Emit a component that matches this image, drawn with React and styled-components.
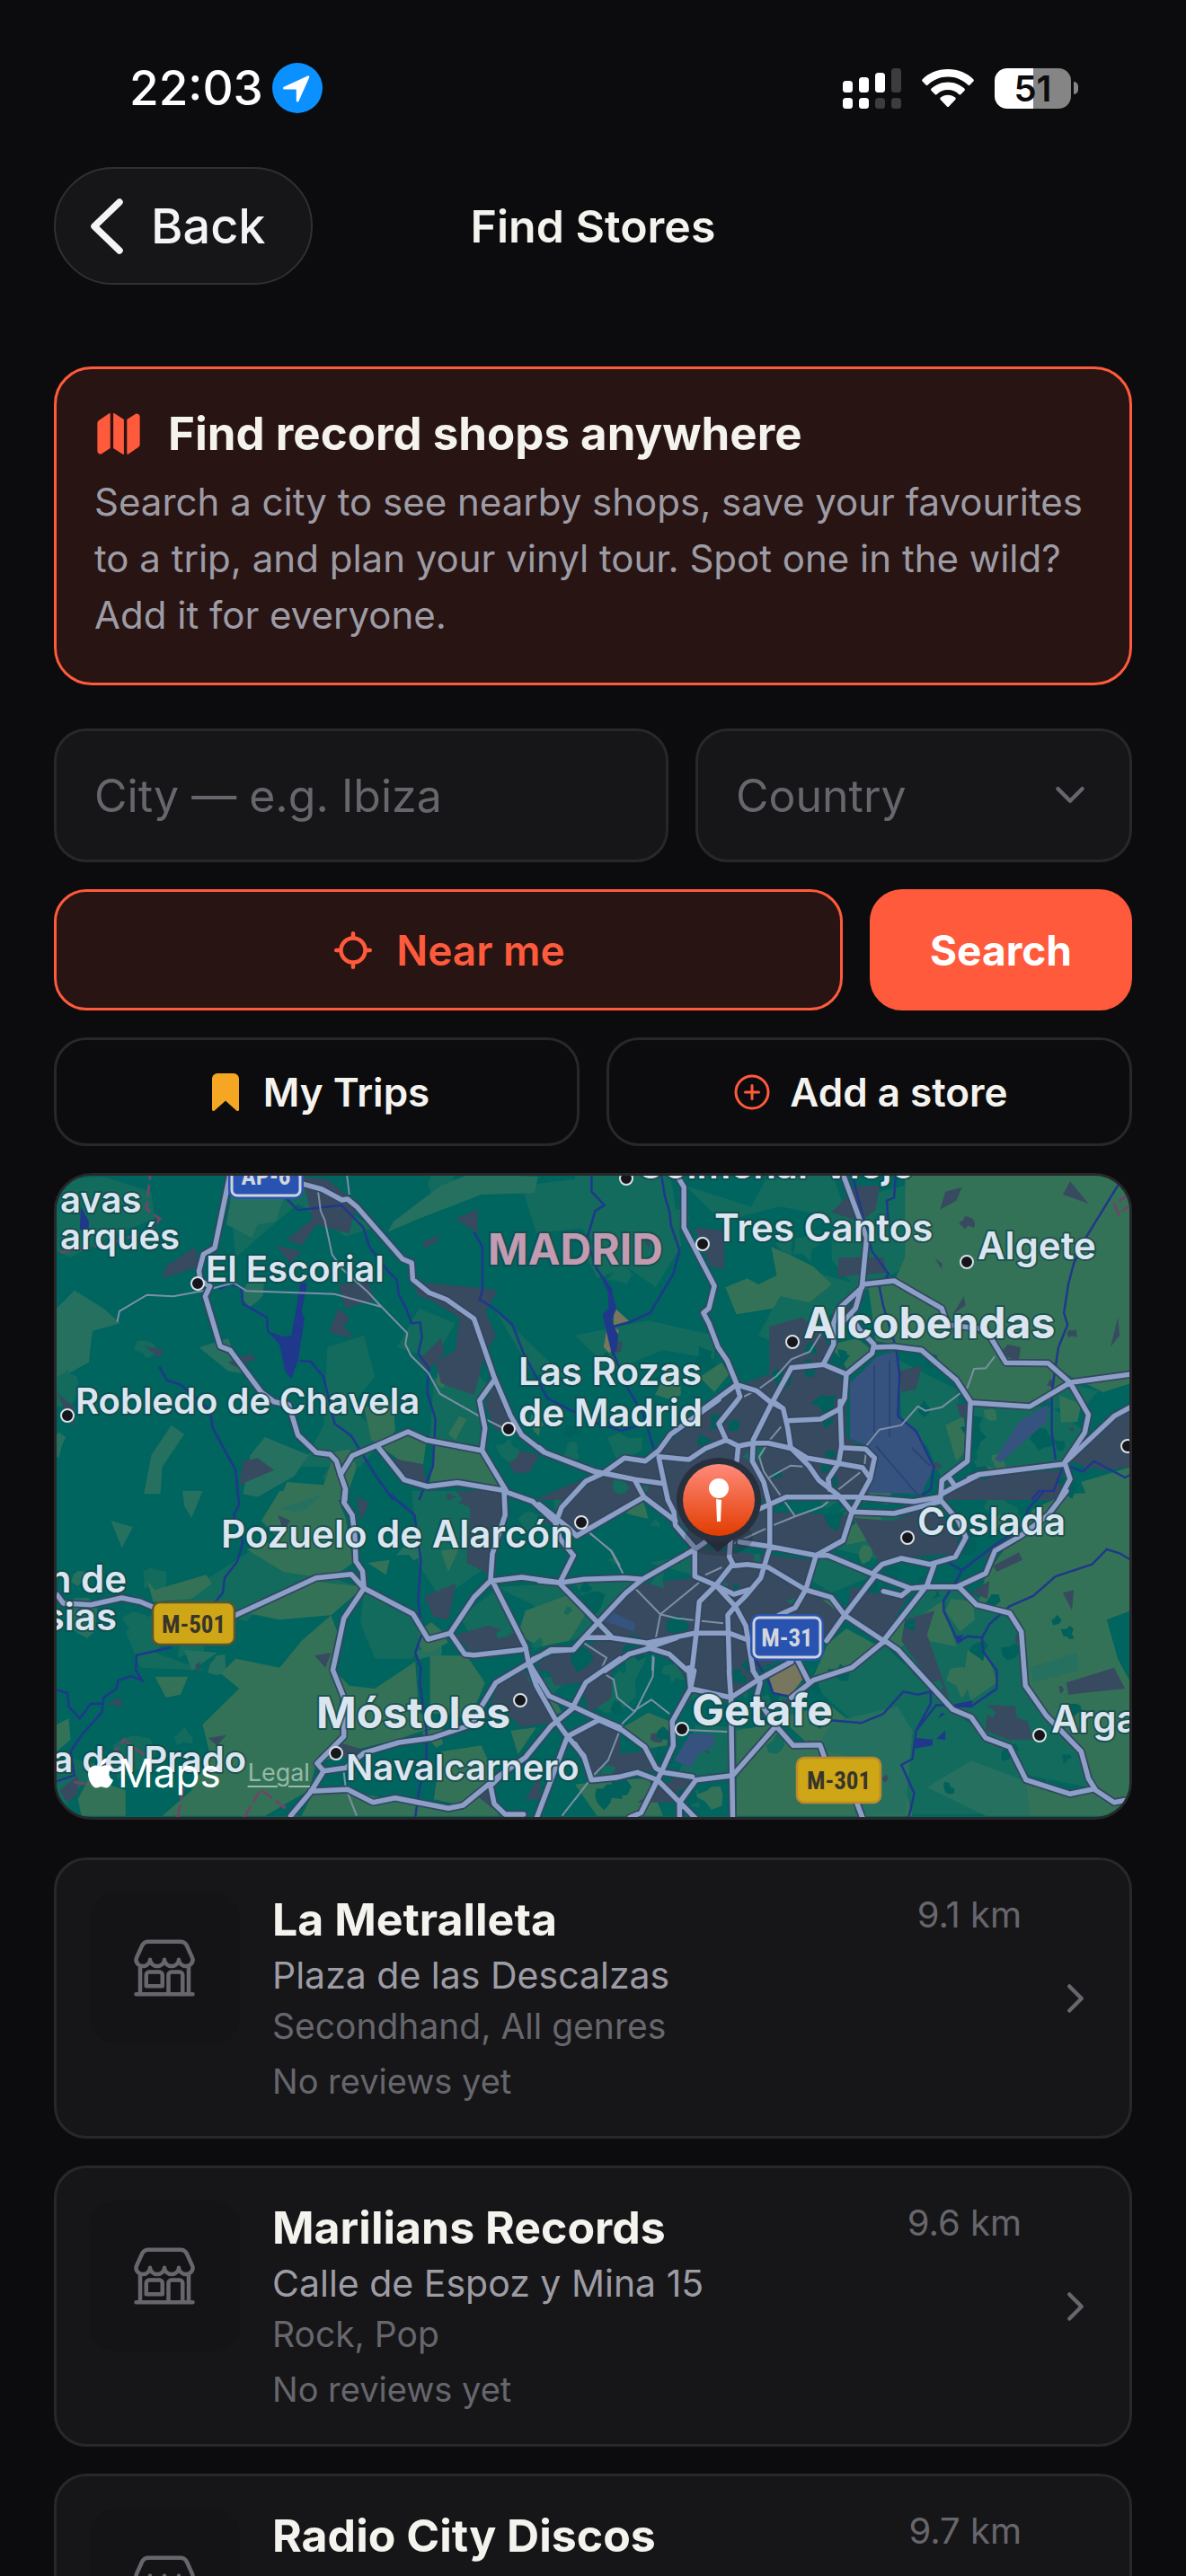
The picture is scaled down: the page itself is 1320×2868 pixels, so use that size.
import React from "react";
import styled, { createGlobalStyle } from "styled-components";
import {
  IoAddCircleOutline,
  IoBookmark,
  IoChevronDown,
  IoChevronForward,
  IoLocate,
  IoMap,
  IoStorefrontOutline,
} from "react-icons/io5";
import { FaApple } from "react-icons/fa";

const color = {
  bg: "#0c0c0e",
  surface: "#161618",
  line: "#28282b",
  text: "#f5f3ee",
  muted: "#9d9ca5",
  dim: "#67666d",
  accent: "#ff5a3c",
  accentBg: "#281413",
  amber: "#f5a623",
};

const GlobalStyle = createGlobalStyle`
  *, *::before, *::after { box-sizing: border-box; }
  body { margin: 0; background: ${color.bg}; }
  body, button, input, select { font-family: Inter, "Liberation Sans", sans-serif; }
  button, input, select { margin: 0; }
  h1, h2, h3, p, ul { margin: 0; padding: 0; }
`;

const Screen = styled.div`
  height: 100vh;
  overflow-x: hidden;
  overflow-y: auto;
  scrollbar-width: none;
  background: ${color.bg};
  color: ${color.text};
`;

const StatusBar = styled.div`
  display: flex;
  align-items: center;
  justify-content: space-between;
  height: 56px;
  margin: 70px 120px 60px 144px;
`;

const StatusGroup = styled.div`
  display: flex;
  align-items: center;
  gap: ${(p) => p.$gap}px;
`;

const Clock = styled.time`
  font-size: 53px;
  font-weight: 500;
  line-height: 56px;
  color: #fff;
`;

const Battery = styled.div`
  display: flex;
  align-items: center;
  gap: 3px;
`;

const BatteryBody = styled.div`
  width: 85px;
  height: 45px;
  border-radius: 14px;
  background: linear-gradient(90deg, #fff 51%, #858585 51%);
  color: ${color.bg};
  font-size: 40px;
  font-weight: 600;
  line-height: 45px;
  text-align: center;
`;

const BatteryCap = styled.div`
  width: 5px;
  height: 14px;
  border-radius: 0 8px 8px 0;
  background: #858585;
`;

const NavBar = styled.header`
  display: grid;
  grid-template-columns: 1fr auto 1fr;
  align-items: center;
  padding: 0 60px;
  margin-bottom: 91px;
`;

const BackButton = styled.button`
  justify-self: start;
  display: flex;
  align-items: center;
  gap: 28px;
  height: 131px;
  padding: 0 50px 0 36px;
  border: 2px solid #303033;
  border-radius: 66px;
  background: ${color.surface};
  color: #f4f4f6;
  font-size: 54px;
  font-weight: 500;
`;

const NavTitle = styled.h1`
  font-size: 50px;
  font-weight: 600;
  line-height: 60px;
`;

const Main = styled.main`
  display: flex;
  flex-direction: column;
  gap: 30px;
  padding: 0 60px 60px;
`;

const Hero = styled.section`
  display: flex;
  flex-direction: column;
  gap: 14px;
  padding: 42px 42px 44px;
  margin-bottom: 18px;
  border: 3px solid ${color.accent};
  border-radius: 42px;
  background: ${color.accentBg};
`;

const HeroHeading = styled.div`
  display: flex;
  align-items: center;
  gap: 28px;
  color: ${color.accent};
`;

const HeroTitle = styled.h2`
  color: ${color.text};
  font-size: 51px;
  font-weight: 700;
  line-height: 60px;
`;

const HeroText = styled.p`
  color: ${color.muted};
  font-size: 42px;
  line-height: 63px;
`;

const Row = styled.div`
  display: grid;
  grid-template-columns: ${(p) => p.$columns};
  gap: 30px;
`;

const fieldFont = `
  width: 100%;
  height: 149px;
  padding: 0 42px;
  border: 3px solid ${color.line};
  border-radius: 36px;
  background: ${color.surface};
  color: ${color.dim};
  font-size: 50px;
  font-weight: 400;
  outline: none;
`;

const CityInput = styled.input`
  ${fieldFont}
  &::placeholder { color: ${color.dim}; opacity: 1; }
`;

const SelectWrap = styled.div`
  position: relative;
  svg {
    position: absolute;
    right: 45px;
    top: 50px;
    color: ${color.dim};
    pointer-events: none;
  }
`;

const CountrySelect = styled.select`
  ${fieldFont}
  appearance: none;
`;

const variants = {
  tinted: { bg: color.accentBg, line: color.accent, text: color.accent, h: 135, size: 46, weight: 600, gap: 24 },
  solid: { bg: color.accent, line: color.accent, text: "#fff", h: 135, size: 46, weight: 700, gap: 24 },
  outline: { bg: color.bg, line: color.line, text: color.text, h: 121, size: 44, weight: 600, gap: 18 },
};

const ActionButton = styled.button`
  display: flex;
  align-items: center;
  justify-content: center;
  gap: ${(p) => variants[p.$variant].gap}px;
  height: ${(p) => variants[p.$variant].h}px;
  padding: 0;
  border: 3px solid ${(p) => variants[p.$variant].line};
  border-radius: 36px;
  background: ${(p) => variants[p.$variant].bg};
  color: ${(p) => variants[p.$variant].text};
  font-size: ${(p) => variants[p.$variant].size}px;
  font-weight: ${(p) => variants[p.$variant].weight};
  svg { color: ${(p) => p.$icon || "inherit"}; }
`;

const MapCard = styled.section`
  position: relative;
  height: 720px;
  margin-bottom: 12px;
  border: 3px solid ${color.line};
  border-radius: 42px;
  overflow: hidden;
  background: #00645f;
`;

const MapCanvas = styled.svg`
  display: block;
  width: 100%;
  height: 100%;
`;

const MapCredit = styled.div`
  position: absolute;
  left: 30px;
  bottom: 22px;
  display: flex;
  align-items: center;
  color: #fff;
  font-size: 44px;
  font-weight: 400;
  line-height: 54px;
`;

const LegalLink = styled.a`
  margin-left: 30px;
  color: rgba(208, 226, 218, 0.65);
  font-size: 27px;
  line-height: 54px;
  text-underline-offset: 5px;
`;

const StoreList = styled.ul`
  display: flex;
  flex-direction: column;
  gap: 30px;
  list-style: none;
`;

const StoreCard = styled.li`
  display: flex;
  align-items: flex-start;
  gap: 36px;
  min-height: 313px;
  padding: 36px;
  border: 3px solid ${color.line};
  border-radius: 36px;
  background: ${color.surface};
  color: ${color.dim};
`;

const Thumb = styled.div`
  display: grid;
  place-items: center;
  flex: none;
  width: 168px;
  height: 168px;
  border-radius: 30px;
  background: #141416;
`;

const StoreInfo = styled.div`
  flex: 1;
  min-width: 0;
`;

const StoreHead = styled.div`
  display: flex;
  justify-content: space-between;
`;

const StoreName = styled.h3`
  color: ${color.text};
  font-size: 50px;
  font-weight: 700;
  line-height: 60px;
`;

const Distance = styled.span`
  font-size: 40px;
  line-height: 50px;
`;

const Address = styled.p`
  margin-top: 4px;
  color: ${color.muted};
  font-size: 41px;
  line-height: 56px;
`;

const Genres = styled.p`
  margin-top: 2px;
  font-size: 39px;
  line-height: 54px;
`;

const Reviews = styled.p`
  margin-top: 9px;
  font-size: 38px;
  line-height: 50px;
`;

const OpenMark = styled.span`
  display: flex;
  align-self: center;
  flex: none;
`;

/* ---------- Map drawing ---------- */

const sheets = {
  nw: [50, 1300, 2.45, 3],
  ne: [640, 1300, 2.45, 3],
  sw: [50, 1660, 2.45, 3],
  se: [640, 1660, 2.45, 3],
  mid: [600, 1560, 3, 3],
};

const trace = (sheet, line, close) => {
  const [ox, oy, kx, ky] = sheets[sheet];
  const pts = line.trim().split(/\s+/).map((pair) => {
    const [x, y] = pair.split(",").map(Number);
    return `${(ox + x / kx).toFixed(1)} ${(oy + y / ky).toFixed(1)}`;
  });
  return `M${pts.join("L")}${close ? "Z" : ""}`;
};

const path = (group, close) =>
  Object.entries(group)
    .flatMap(([sheet, lines]) => lines.map((l) => trace(sheet, l, close)))
    .join("");

const roads = {
  nw: [
    "505,20 463,268 432,290 420,345 424,378 450,396 437,430 478,597 505,610 590,750 625,782 665,792 690,893 740,952 778,958 795,980 806,1025 820,1075 818,1110",
    "705,55 755,72 810,108 825,105 850,130 975,305 1000,318 1003,373 1048,418 1095,440 1170,505 1225,700 1270,830 1300,893 1360,950 1500,1015 1568,1032",
    "1225,710 1185,778 1200,870 1192,945 1258,1080",
    "806,1025 838,962 905,928 990,882 1040,910 1192,945",
    "905,928 980,1043 1043,1065 1125,1052 1250,1078",
  ],
  ne: [
    "275,20 297,65 297,200 380,395 365,470 350,485 365,520 390,600 415,645 440,720",
    "730,20 795,235 783,390 765,470 735,510",
    "783,390 870,378 1000,470 1015,525 1120,540 1175,652 1290,653 1350,718 1515,690",
    "783,400 720,470 705,520 705,590 678,655",
    "590,668 678,658 740,690 735,770 722,800",
    "740,690 810,620 815,590 775,540 755,500",
    "815,600 870,598 945,610 1040,710 1080,785",
    "1080,785 1240,798 1350,718 1400,825 1390,885 1335,985 1350,1040 1320,1110",
    "1335,990 1100,1025 1074,1038",
    "1515,800 1470,830 1340,980",
    "440,725 344,812",
    "440,725 450,765 438,785",
    "440,725 495,745 530,780 560,800",
    "590,668 535,790",
  ],
  mid: [
    "0,155 20,172 190,238 215,240 320,262 415,275",
    "215,240 285,190 355,200 400,165 440,110 600,-5",
    "400,185 500,195 555,158 625,130 665,150 715,140 765,140 845,158 895,190 1000,208 1080,222 1100,250",
    "400,190 415,260 430,330 450,370 455,415 520,490 520,585 590,615",
    "215,240 155,268 75,355 55,410 70,460 115,515 70,605",
    "320,265 350,320 455,400",
    "350,320 125,450 100,425 0,345",
    "0,600 70,607 150,595 285,590 345,595 520,495 555,470",
    "70,610 240,785",
    "345,595 290,640 150,790",
    "-20,862 40,835 115,830 150,790 240,790 360,808 520,775 635,775 690,795",
    "360,825 460,790",
    "220,900 300,845 370,825 435,845 495,900",
    "665,150 660,200",
    "625,130 600,75 660,0",
    "780,0 715,130 712,200 750,270 770,350 770,490 740,590 690,650 655,685",
    "640,450 635,520 650,550 695,545 765,555 890,630",
    "645,545 590,615 535,670 525,775 510,900",
    "590,615 655,685 690,750 715,900",
    "655,685 630,715 635,900",
    "600,620 650,645 700,630",
    "670,470 770,485 925,515 965,515 1120,580 1240,625 1295,620 1405,620",
    "780,0 815,25 830,90 840,155 900,215 935,265 1000,315 1045,370 1015,465 925,515 890,630 855,690 800,715",
    "735,360 825,320 1060,320 1250,335 1340,320",
    "1045,370 1185,375 1340,335",
    "890,630 975,655 1020,715 1150,800",
    "1120,585 1020,715 960,800",
    "1120,570 1145,545 1210,525 1305,545 1390,520 1425,455 1400,400 1340,330 1345,265 1430,200 1440,10",
    "1365,250 1390,285 1345,310",
    "1390,285 1470,245",
    "1320,545 1295,615 1150,800",
    "1005,0 1010,150 1000,208 965,260 970,295",
    "1010,155 1090,160 1120,190 1105,260 1045,370",
    "830,65 940,60 1005,25",
    "1150,635 1210,650 1240,625",
  ],
  sw: [
    "818,0 815,38 838,80 845,150 848,235 866,268 870,325 815,425 797,530 785,598 815,690 815,820 770,875 742,910 760,935",
    "32,345 50,375 125,380 210,357 260,370 295,388",
    "520,415 740,290 835,278 870,325 1003,410 1045,495 1105,475 1145,545 1170,548 1300,530",
    "1105,475 1170,355 1215,300 1220,210 1255,80 1252,0",
    "1220,300 1310,520 1320,580 1340,650 1395,770 1425,820 1470,885 1490,965 1568,955",
    "1220,300 1300,288 1400,305",
    "1250,0 1330,35 1395,108",
    "1470,490 1440,530 1380,530 1320,575 1230,640 1190,720 1165,780 1055,825 965,840 870,875 820,925 760,935 725,1005 670,1085",
    "1320,575 1375,685 1440,720 1510,760 1568,790",
    "1440,720 1475,640 1568,560",
    "1440,725 1380,785 1310,890 1240,950 1140,1050 1100,1060 955,1025 895,1040 825,997 725,1003",
    "1510,765 1425,820 1340,1095",
    "1240,955 1215,985 1225,1045 1255,1080 1305,1080",
  ],
  se: [
    "1045,318 1095,380 1185,408 1217,470 1228,650 1285,750 1380,870 1400,960 1420,1000 1470,1040 1515,1030",
    "1045,318 1120,275 1145,200 1215,150 1290,80 1340,0",
    "845,500 880,530 1030,730 1080,755 1120,825 1185,855 1230,965 1350,1012 1415,995",
    "845,500 755,590 650,632 590,690",
    "605,560 635,632",
    "590,570 500,630 425,690",
    "310,590 315,660 425,690",
    "315,660 265,770 268,850 235,940 180,1075 150,1090",
    "420,600 425,690 430,1095",
    "325,600 315,660",
    "485,600 505,640 495,690 548,785 595,850 668,848 680,890",
    "768,1040 785,1095",
    "548,785 430,950 330,965 285,1040 285,1095",
    "240,940 320,955",
    "225,965 330,1095",
    "65,765 130,800 190,855 220,925 240,940",
    "0,845 25,890 45,965 110,958 170,940 225,965",
  ],
};

const lanes = {
  nw: [
    "197,515 203,480 278,425 350,430 430,412 515,385 550,412 790,422 918,465",
    "745,80 752,145 763,175 783,290 812,340 880,415 918,465 988,553 983,590 998,628 1045,685 1077,755 1180,827 1250,870",
    "823,20 830,90",
  ],
  ne: [
    "670,555 640,615 590,640 550,695 500,740 460,765",
    "1145,630 1120,670 1088,672 1070,735 1000,800 955,812 935,797 890,860 830,875 795,928 790,990",
  ],
  mid: [
    "808,85 770,130 735,185 750,235 855,385 945,352 965,335",
    "768,255 840,215 880,218",
    "1000,295 1072,238",
    "855,385 780,415 640,480",
    "170,440 240,500 280,575",
    "320,625 405,712 460,725 615,742",
    "535,605 405,712 390,790",
    "150,808 225,857 205,900",
    "555,580 610,555",
    "380,850 378,900",
  ],
  se: [
    "215,555 212,620 165,735 130,775 90,900 50,950 0,1030",
    "85,615 105,630 115,690 160,735 208,697 258,745",
    "300,798 415,804",
  ],
  sw: ["815,940 820,990 850,1085", "1485,140 1545,200 1568,250", "1480,975 1410,1085"],
};

const streams = {
  nw: [
    "660,105 690,142 740,135 808,125 868,200 885,265 935,345 960,375 965,425 985,470 1000,520 1023,517 1028,565 1018,620 1047,670 1042,750 1065,840 1058,1000 1020,1110",
    "1170,215 1193,265 1193,410 1185,440 1230,475 1275,525 1305,620 1370,770 1450,820",
    "312,665 333,710 370,725 450,810 458,870 520,1010 528,1110",
    "475,405 505,388 535,400 540,455 605,500 608,550",
    "695,645 725,648 760,700 790,855 835,895 900,1025 950,1110",
  ],
  ne: [
    "45,20 45,80 80,125 55,145 32,240 60,340 100,410",
    "235,20 245,95 258,150 262,195 285,275 268,355 205,485 150,515 105,530",
    "105,620 140,730 185,820 215,940",
    "50,850 125,878 180,860",
    "755,20 780,140 810,280 855,355 830,400 840,460 875,600",
    "875,20 870,100 850,110 855,190",
    "1485,50 1395,230 1360,320 1345,390 1333,485 1343,525 1318,600 1300,750 1300,880 1310,975",
    "875,600 885,690 880,830 930,880 978,1000 970,1075 945,1095",
    "1350,1000 1385,1015 1415,980 1500,1035 1515,1025",
    "1330,1000 1305,1080 1265,1080 1245,1110",
  ],
  sw: [
    "525,0 530,45 515,80 540,170 525,235 490,290 485,340 465,370",
    "345,522 250,548 248,600 265,632 235,618 200,632 195,660 160,690 155,740 100,815 70,870 80,950 32,970",
    "32,665 62,675 65,720 95,760 125,710 160,710",
    "930,0 1008,80 1025,230 1018,360 1027,480 1010,540 1025,590 1022,640 1040,800 1040,900 1020,1000 1010,1090",
  ],
  se: [
    "1515,230 1485,208 1450,195 1410,245 1310,285 1250,350 1185,385 1130,445 1110,490 1070,485 1045,505 1005,400 1005,365 1040,300 1055,265 1020,240",
    "1280,0 1235,60 1220,120 1145,180 1055,265",
    "1110,490 1112,535 1150,600 1150,660 1080,720 985,715 930,800 920,895 890,915 925,1010 910,1090",
    "690,765 780,775 840,745 895,670 935,680 970,670 970,710 930,800",
    "490,560 530,640 540,675 600,690",
    "245,0 260,60",
  ],
};

const water = {
  nw: [
    "697,385 715,385 700,480 708,505 690,645 672,705 655,680 640,590 605,545 650,565 672,560 685,470",
    "98,130 120,180 118,230 95,205",
  ],
  ne: ["60,340 80,370 100,410 113,470 100,510 118,560 113,610 102,630 88,560 75,490 92,470 90,415"],
  se: ["930,825 975,830 975,850 925,860", "1010,800 1010,830 985,828", "1035,712 1085,700 1080,720 1035,725", "1035,485 1060,480 1045,510", "1000,740 1010,745 990,760"],
};

const sand = {
  ne: ["105,465 150,515 105,530", "110,535 120,545 95,620 78,600 85,550"],
  se: ["600,565 620,630 585,685 540,675 530,625"],
};

const runway = {
  ne: [
    "825,630 880,612 885,680 880,830 925,870 978,1000 945,1090 790,1085 820,1000 800,930 750,905 750,720",
    "1290,790 1285,850 1160,985 1145,975 1210,850",
  ],
  mid: ["245,705 320,740 320,770 220,735"],
  se: ["315,810 380,815 378,850 335,880 315,925 270,900"],
};

// Light hill grassland in the west
const grass = {
  nw: [
    "510,80 560,60 650,105 630,180 580,190 565,235 495,190",
    "950,180 1080,60 1160,20 1345,30 1335,85 1190,90 1020,170 935,215",
    "32,470 80,410 160,470 205,520 130,545 120,640 32,700",
    "270,1090 290,960 345,860 380,890 320,1000 315,1090",
    "420,600 500,570 520,640 560,690 500,680",
    "560,960 600,900 720,960 680,1030 580,1100 540,1090",
    "100,590 125,590 120,650 60,690",
  ],
  sw: [
    "375,0 430,0 400,90 380,50",
    "180,100 240,120 210,190",
    "380,530 470,540 400,600",
    "640,60 760,10 700,70",
  ],
  se: [
    "700,770 880,720 920,800 900,1080 760,1080 790,900 660,860",
    "960,990 1080,900 1230,970 1240,1085 1120,1085",
    "1240,590 1370,540 1370,600 1250,640",
  ],
};

// Farmland
const fields = {
  nw: [
    "870,800 950,780 955,880 920,925 890,910",
    "1100,890 1130,830 1150,840 1120,910",
    "920,935 990,890 1040,915 1030,1005 975,985",
    "1062,925 1185,950 1240,1070 1130,1045 1050,1050",
    "640,1110 660,1050 760,1060 790,950 830,940 850,1000 820,1110",
  ],
  ne: [
    "900,20 1420,20 1515,60 1515,720 1440,750 1290,660 1175,650 1120,540 1010,520 870,380 900,300",
    "410,400 470,370 500,390 550,360 535,265 600,300 650,330 700,390 640,450 560,430 540,470 440,490",
    "800,400 870,390 1000,480 1020,530 1120,560 1180,660 1290,665 1340,720 1240,790 1085,780 1040,700 950,600 820,580",
    "1010,860 1060,830 1070,940 1040,980",
    "1320,760 1380,790 1370,850 1325,850",
    "1410,890 1460,920 1400,970 1360,975",
    "340,700 400,650 420,690 380,750",
    "700,590 770,570 810,610 740,680 690,650",
    "1380,1050 1515,1000 1515,1110 1400,1110",
  ],
  sw: [
    "640,0 790,0 820,90 840,240 800,275 730,285 650,270 550,195 640,160 590,100",
    "870,320 720,300 560,410 640,430 780,415 800,480 790,600 830,650 900,660 1010,570 1020,740 1080,780 960,830 860,860 740,910 720,1000 600,1085 320,1085 400,1000 450,880 430,780 530,660 480,610 520,560 640,590 700,500",
    "1290,480 1310,400 1420,350 1480,400 1430,500 1350,520",
    "280,300 300,330 440,280 455,310 400,360 295,370",
    "300,620 390,620 370,680 330,690",
    "1050,550 1150,550 1200,640 1160,760 1050,740",
    "32,780 65,760 70,830 32,870",
    "1080,200 1130,190 1100,270",
    "880,240 940,230 930,280",
    "1080,870 1190,850 1230,960 1140,1050 1060,1030",
    "1270,800 1340,790 1290,880",
    "730,1010 860,1010 960,1035 1090,1070 1200,1000 1240,1085 700,1085",
    "90,1030 120,960 220,1000 220,1085 100,1085",
  ],
  se: [
    "1250,60 1340,10 1515,0 1515,400 1450,430 1480,560 1515,640 1515,1085 1240,1085 1180,1010 1220,960 1320,1010 1410,990 1370,870 1230,650 1215,470 1180,400 1100,375 1120,280 1180,180",
    "690,510 740,460 830,520 750,590 650,620",
    "440,800 530,780 600,855 660,850 880,900 920,1085 440,1085",
    "1025,360 1085,370 1090,430 1050,470 1010,400",
    "1070,530 1130,560 1150,640 1080,700 1060,620",
    "760,60 830,80 860,150 740,180",
    "0,980 110,965 200,960 240,1085 60,1085",
    "130,790 200,740 260,770 250,850 200,860",
    "890,460 1000,370 1040,520 960,500",
    "650,860 560,760 690,710 740,760 900,800 900,900",
  ],
};

// Mid-tone scrub between the fields and the hills
const scrub = {
  nw: [
    "32,40 160,30 290,80 300,170 200,220 70,300 32,280",
    "500,30 700,60 900,200 820,230 690,120 520,300",
    "770,600 870,560 900,700 830,800 930,900 860,1000 700,1000 760,860",
    "1020,470 1120,520 1060,640 960,600",
    "1300,60 1568,20 1568,330 1480,200 1340,220",
    "1230,480 1300,560 1420,700 1330,690",
    "1060,700 1200,780 1190,930 1050,900",
  ],
  ne: [
    "0,20 260,20 290,260 220,400 140,330 60,260 0,180",
    "300,60 480,130 520,40 700,20 750,180 560,130 400,180",
    "0,560 200,510 380,560 380,640 240,610 100,680",
    "700,120 900,60 900,330 780,420 700,310",
    "880,640 1040,740 1075,960 1000,1040 960,930 890,840",
    "1080,790 1300,800 1390,880 1320,990 1100,1010",
    "600,330 800,400 700,480 640,640 500,560",
  ],
  sw: [
    "560,200 860,320 600,390 380,440 300,540 440,600 260,590 220,470",
    "1130,420 1230,330 1300,520 1170,500",
    "1230,320 1400,310 1500,450 1440,500 1330,380",
    "870,340 1000,410 1040,500 1000,560 900,560 860,440",
    "1000,0 1200,0 1150,120 1210,250 1080,360 1020,250",
  ],
  se: [
    "0,310 180,300 60,430",
    "640,640 840,510 1020,730 1180,860 1220,960 1180,1080 900,1080 900,830 740,750",
    "850,480 960,330 1060,330 1200,420 1220,640 1380,860 1400,990 1240,950 1120,820 1020,700",
    "560,240 740,220 800,290 700,340",
    "740,80 880,80 960,180 830,230 700,190",
    "330,780 560,800 430,940 280,950",
    "200,240 330,210 320,280",
    "500,690 620,640 600,800",
  ],
};

// Built-up areas
const urban = {
  nw: [
    "330,330 410,265 420,330 320,370",
    "700,30 770,40 850,120 830,220 740,190 700,260 660,240 730,170",
    "1120,170 1180,140 1180,220",
    "1030,250 1075,225 1070,245 1035,270",
    "1000,380 1170,400 1235,410 1200,480 1230,560 1200,620 1170,760 1080,720 1065,650 1120,610 1130,500 1050,440 1020,430",
    "800,470 830,500 815,530 840,570 775,550",
    "540,980 580,970 625,1010 530,1060",
    "270,595 325,610 310,635",
    "1240,930 1350,960 1320,1020 1280,1020",
    "500,650 560,620 575,640 520,665",
    "940,970 1030,990 1040,1060 980,1040",
    "630,260 700,280 670,320",
    "32,750 80,800 80,870",
    "1020,640 1080,570 1090,620 1040,680",
    "1370,1090 1470,1040 1568,990 1568,1110 1340,1110",
    "1200,790 1225,730 1280,860 1230,880",
    "800,390 880,380 900,440 820,470",
  ],
  ne: [
    "325,200 410,210 405,340 370,330",
    "530,530 620,500 680,560 700,640 740,700 740,900 820,960 800,1110 200,1110 225,950 440,730 530,690",
    "720,300 840,300 850,350 715,365",
    "770,60 830,60 820,140 780,180 700,150",
    "995,140 1010,80 1055,65 1040,110",
    "1330,90 1350,45 1400,120",
    "1030,490 1060,430 1065,460",
    "1000,320 980,300 1000,340",
    "1180,590 1215,600 1210,650 1160,620",
    "1345,980 1470,840 1515,800 1515,1000 1440,1010",
    "1000,1110 1020,1060 1120,1030 1330,1010 1320,1110",
    "0,1060 130,970 225,980 250,1110 0,1110",
    "885,680 945,660 930,740 890,750",
    "1460,600 1480,500 1485,560",
    "800,420 750,480 735,530 700,500",
  ],
  mid: [
    "0,400 60,380 150,275 320,270 350,320 130,440",
    "440,330 560,330 760,370 1040,380 1010,460 920,510 780,490 520,485",
    "520,490 920,530 890,620 1020,720 960,800 720,900 500,900 370,830 240,790 150,790 340,610 520,590",
    "1050,390 1180,400 1300,350 1420,450 1380,510 1210,520 1140,545",
    "1040,620 1160,650 1240,640 1150,790 1030,710",
    "0,870 120,840 240,800 350,830 220,900 0,900",
  ],
  sw: [
    "1120,0 1250,0 1250,90 1215,280 1150,240 1160,60",
    "1035,350 1120,310 1100,430 1060,420",
    "1120,480 1210,450 1290,480 1300,520 1160,535",
    "1240,640 1310,600 1390,770 1300,790 1250,730 1200,760",
    "1360,560 1520,500 1568,540 1460,640 1390,650",
    "1430,800 1510,780 1568,800 1568,950 1500,950",
    "850,20 885,40 860,100",
    "735,550 780,540 765,590",
    "780,880 800,840 860,860 840,900",
    "445,825 495,815 470,850",
    "170,710 205,690 210,720",
    "40,1000 90,950 90,1010 60,1040",
    "1170,1010 1220,970 1220,1060",
    "1310,1030 1350,950 1350,1030",
    "635,80 670,100 650,130",
    "410,580 425,570 415,610",
  ],
  se: [
    "0,0 330,0 330,150 190,20",
    "260,560 480,560 490,620 425,680 320,650",
    "1080,340 1130,300 1125,360",
    "900,430 980,400 960,480 1020,690 960,620 890,500",
    "1125,715 1220,720 1250,830 1180,830 1120,800",
    "1340,640 1470,590 1500,660 1345,680",
    "1140,250 1210,205 1220,230 1150,270",
    "0,840 60,780 110,800 80,950 50,950",
    "80,880 200,870 230,940 170,930 110,950",
    "170,1040 270,960 320,960 280,1040",
    "20,660 100,600 100,690 40,740",
    "1330,340 1360,330 1355,400",
    "560,700 620,690 620,740",
  ],
};

// Small woods and clearings scattered over the terrain, from a fixed seed.
const scatter = (seed, count, box, size) => {
  let s = seed;
  const next = () => {
    s = (s * 16807) % 2147483647;
    return s / 2147483647;
  };
  const shapes = [];
  for (let i = 0; i < count; i += 1) {
    const cx = box[0] + next() * box[2];
    const cy = box[1] + next() * box[3];
    const r = size * (0.4 + next());
    const n = 7 + Math.floor(next() * 4);
    const pts = [];
    for (let k = 0; k < n; k += 1) {
      const a = (k / n) * Math.PI * 2;
      const d = r * (0.35 + next() * 0.8);
      pts.push(`${(cx + Math.cos(a) * d).toFixed(1)} ${(cy + Math.sin(a) * d).toFixed(1)}`);
    }
    shapes.push(`M${pts.join("L")}Z`);
  }
  return shapes.join("");
};

const towns = [
  ["avas", 67, 1350, 40], ["arqués", 67, 1391, 40], ["El Escorial", 229, 1427, 40],
  ["Robledo de Chavela", 84, 1574, 40], ["Las Rozas", 577, 1542, 42], ["de Madrid", 577, 1588, 42],
  ["Tres Cantos", 795, 1382, 42], ["Algete", 1088, 1402, 42], ["Coslada", 1021, 1709, 42],
  ["Pozuelo de Alarcón", 246, 1723, 42], ["Navalcarnero", 385, 1982, 40],
  ["Arganda", 1170, 1929, 42], ["Colmenar Viejo", 708, 1312, 42],
];
const cutTowns = [["n de", 141, 1773, 42], ["sias", 130, 1815, 42], ["Villa del Prado", 274, 1973, 40]];
const cities = [["Alcobendas", 894, 1490, 48], ["Móstoles", 352, 1924, 48], ["Getafe", 770, 1921, 48]];
const dots = [
  [220, 1429], [75, 1576], [566, 1591], [697, 1312], [782, 1385], [1076, 1405], [882, 1494],
  [1255, 1610], [647, 1695], [1010, 1712], [579, 1893], [374, 1952], [759, 1925], [1157, 1932],
];
const shields = [
  { name: "AP-6", x: 256, y: 1285, w: 80, h: 48, blue: true },
  { name: "M-31", x: 837, y: 1799, w: 78, h: 48, blue: true },
  { name: "M-501", x: 170, y: 1784, w: 91, h: 47 },
  { name: "M-301", x: 887, y: 1957, w: 93, h: 50 },
];

const Label = styled.text`
  font-size: ${(p) => p.$size}px;
  font-weight: ${(p) => p.$weight || 600};
  fill: ${(p) => p.$fill || "#dbe5ef"};
  stroke: rgba(22, 72, 76, 0.75);
  stroke-width: 4px;
  stroke-linejoin: round;
  paint-order: stroke;
  text-anchor: ${(p) => p.$anchor || "start"};
`;

const ShieldText = styled.text`
  font-family: "Roboto Condensed", Roboto, sans-serif;
  font-size: 27px;
  font-weight: 700;
  text-anchor: middle;
  fill: ${(p) => p.$fill};
`;

function MadridMap() {
  return (
    <MapCanvas viewBox="63 1309 1194 714" preserveAspectRatio="xMidYMid slice" role="img" aria-label="Map of record shops around Madrid">
      <defs>
        <linearGradient id="pin" x1="0" y1="0" x2="0" y2="1">
          <stop offset="0" stopColor="#ff8a7a" />
          <stop offset="1" stopColor="#e23c00" />
        </linearGradient>
      </defs>
      <rect x="63" y="1309" width="1194" height="714" fill="#00645f" />
      <g fill="#126b5d">
        <path d={path(scrub, true)} />
        <path d={scatter(71, 46, [63, 1309, 1194, 714], 24)} />
      </g>
      <path d={scatter(19, 8, [63, 1309, 420, 600], 18)} fill="#26705f" />
      <path d={path(fields, true)} fill="#347257" />
      <path d={path(grass, true)} fill="#26705f" />
      <path d={scatter(5, 22, [480, 1500, 760, 500], 18)} fill="#347257" />
      <path d={path(urban, true)} fill="#384a5f" />
      <path d={scatter(133, 34, [500, 1340, 740, 660], 8)} fill="#384a5f" />
      <path d={scatter(47, 70, [640, 1500, 560, 500], 12)} fill="#00605c" />
      <path d={scatter(88, 34, [560, 1600, 620, 380], 10)} fill="#126b5d" />
      <path d={path(sand, true)} fill="#77765f" />
      <path d={path(runway, true)} fill="#36527f" />
      <path d="M973 1520V1595M990 1515V1600M975 1610L1035 1680M1015 1612L1035 1632" stroke="#2c4478" strokeWidth="2" fill="none" />
      <path d={path(water, true)} fill="#1f388c" />
      <path d={path(streams)} stroke="#1f388c" strokeWidth="2.5" fill="none" />
      <path
        d="M168 1300L163 1346L178 1357L168 1370L120 1385L63 1395M82 1984L100 1987L138 1937L175 1965M198 2023L205 1985M272 2023L290 1992L330 2023M1257 1330L1240 1340L1245 1352L1257 1342"
        stroke="#6f4568" strokeWidth="3" strokeDasharray="14 5" fill="none"
      />
      <path d={path(lanes)} stroke="#7d8fa6" strokeWidth="2" fill="none" />
      <g fill="none" strokeLinejoin="round" strokeLinecap="round">
        <path d={path(roads)} stroke="#34465f" strokeWidth="9" />
        <path d={path(roads)} stroke="#8c9fc6" strokeWidth="5.5" />
      </g>
      {dots.map(([x, y]) => (
        <circle key={`${x}-${y}`} cx={x} cy={y} r="7" fill="#15161c" stroke="#dbe0e6" strokeWidth="2" />
      ))}
      {shields.map((s) => (
        <g key={s.name}>
          <rect x={s.x} y={s.y} width={s.w} height={s.h} rx="8" fill={s.blue ? "#2853b0" : "#cfa615"} stroke={s.blue ? "#2853b0" : s.name === "M-301" ? "#bd8a2b" : "#5b5432"} strokeWidth={s.blue ? 4 : 2.5} />
          {s.blue && <rect x={s.x + 2} y={s.y + 2} width={s.w - 4} height={s.h - 4} rx="6" fill="none" stroke="#ced3dc" strokeWidth="3" />}
          <ShieldText x={s.x + s.w / 2} y={s.y + s.h / 2 + 10} $fill={s.blue ? "#d2d6dd" : "#37352c"}>{s.name}</ShieldText>
        </g>
      ))}
      <Label x="543" y="1408" $size={48} $weight={700} $fill="#c29bb1">MADRID</Label>
      {towns.map(([name, x, y, size]) => <Label key={name} x={x} y={y} $size={size}>{name}</Label>)}
      {cutTowns.map(([name, x, y, size]) => <Label key={name} x={x} y={y} $size={size} $anchor="end">{name}</Label>)}
      {cities.map(([name, x, y, size]) => <Label key={name} x={x} y={y} $size={size} $weight={700}>{name}</Label>)}
      <ellipse cx="800" cy="1712" rx="38" ry="20" fill="#1c2230" opacity=".25" />
      <path d="M780 1711L799 1728L819 1711Z" fill="#252b3a" />
      <circle cx="800" cy="1670" r="47" fill="#282f3d" />
      <circle cx="800" cy="1670" r="40" fill="url(#pin)" />
      <circle cx="800" cy="1657" r="11" fill="#fff" />
      <path d="M797 1669L803 1670L802 1694H798Z" fill="#fff" />
    </MapCanvas>
  );
}

/* ---------- Status icons ---------- */

const LocationBadge = () => (
  <svg width="56" height="56" viewBox="0 0 56 56" aria-hidden="true">
    <circle cx="28" cy="28" r="28" fill="#0a91ff" />
    <path d="M39.5 14.5c1.200-.5 2.200.5 1.700 1.700L29.500 42.500c-.7 1.500-2.700 1.100-2.700-.5V30.500c0-.7-.3-1-1-1H13.500c-1.700 0-2.100-2-.6-2.700Z" fill="#fff" />
  </svg>
);

const signal = [
  [0, 14, 13, 1], [18, 10, 17, 1], [36, 5, 22, 1], [54, 0, 27, 0],
  [0, 33, 12, 1], [18, 33, 12, 1], [36, 33, 12, 0], [54, 33, 12, 0],
];

const SignalIcon = () => (
  <svg width="65" height="45" viewBox="0 0 65 45" aria-hidden="true">
    {signal.map(([x, y, h, on]) => (
      <rect key={`${x}-${y}`} x={x} y={y} width="11" height={h} rx="3.500" fill={on ? "#fff" : "#3c3c3e"} />
    ))}
  </svg>
);

const WifiIcon = () => (
  <svg width="58" height="43" viewBox="0 0 58 43" aria-hidden="true" fill="#fff">
    <path d="M29 0C17.500 0 7.500 4.500.7 11.200c-.8.8-.8 1.700-.1 2.400L4.400 17.500c.7.7 1.600.7 2.300 0C12.500 12 20.300 8.600 29 8.600S45.500 12 51.300 17.500c.7.7 1.600.7 2.300 0l3.800-3.900c.7-.7.7-1.600-.1-2.400C50.500 4.500 40.500 0 29 0Z" />
    <path d="M29 14.500c-7.200 0-13.600 2.800-18.300 7.100-.8.700-.8 1.700-.1 2.400l4 3.900c.7.7 1.500.7 2.200.1C20 25 24.200 23.100 29 23.100S38 25 41.200 28c.7.600 1.500.6 2.200-.1l4-3.900c.7-.7.7-1.700-.1-2.400C42.600 17.300 36.200 14.500 29 14.500Z" />
    <path d="M29 28.700c-3.300 0-6.100 1.200-8.100 2.900-.8.700-.8 1.600-.1 2.300l7.100 7.500c.7.700 1.500.7 2.200 0l7.100-7.500c.7-.7.7-1.600-.1-2.300-2-1.700-4.800-2.900-8.100-2.900Z" />
  </svg>
);

const BackChevron = () => (
  <svg width="42" height="66" viewBox="0 0 42 66" fill="none" aria-hidden="true">
    <path d="M35 6L7 33L35 60" stroke="currentColor" strokeWidth="7.500" strokeLinecap="round" strokeLinejoin="round" />
  </svg>
);

const stores = [
  { name: "La Metralleta", address: "Plaza de las Descalzas", genres: "Secondhand, All genres", reviews: "No reviews yet", km: "9.1 km" },
  { name: "Marilians Records", address: "Calle de Espoz y Mina 15", genres: "Rock, Pop", reviews: "No reviews yet", km: "9.6 km" },
  { name: "Radio City Discos", km: "9.7 km" },
];

export default function App() {
  return (
    <Screen>
      <GlobalStyle />
      <StatusBar>
        <StatusGroup $gap={10}>
          <Clock>22:03</Clock>
          <LocationBadge />
        </StatusGroup>
        <StatusGroup $gap={23}>
          <SignalIcon />
          <WifiIcon />
          <Battery>
            <BatteryBody>51</BatteryBody>
            <BatteryCap />
          </Battery>
        </StatusGroup>
      </StatusBar>

      <NavBar>
        <BackButton type="button">
          <BackChevron />
          Back
        </BackButton>
        <NavTitle>Find Stores</NavTitle>
      </NavBar>

      <Main>
        <Hero>
          <HeroHeading>
            <IoMap size={54} aria-hidden="true" />
            <HeroTitle>Find record shops anywhere</HeroTitle>
          </HeroHeading>
          <HeroText>
            Search a city to see nearby shops, save your favourites to a trip, and plan your vinyl tour. Spot one in the wild? Add it for everyone.
          </HeroText>
        </Hero>

        <Row $columns="684fr 486fr">
          <CityInput type="text" aria-label="City" placeholder="City — e.g. Ibiza" />
          <SelectWrap>
            <CountrySelect aria-label="Country" defaultValue="">
              <option value="">Country</option>
            </CountrySelect>
            <IoChevronDown size={48} aria-hidden="true" />
          </SelectWrap>
        </Row>

        <Row $columns="1fr 292px">
          <ActionButton type="button" $variant="tinted">
            <IoLocate size={48} aria-hidden="true" />
            Near me
          </ActionButton>
          <ActionButton type="button" $variant="solid">Search</ActionButton>
        </Row>

        <Row $columns="1fr 1fr">
          <ActionButton type="button" $variant="outline" $icon={color.amber}>
            <IoBookmark size={48} aria-hidden="true" />
            My Trips
          </ActionButton>
          <ActionButton type="button" $variant="outline" $icon={color.accent}>
            <IoAddCircleOutline size={48} aria-hidden="true" />
            Add a store
          </ActionButton>
        </Row>

        <MapCard>
          <MadridMap />
          <MapCredit>
            <FaApple size={38} aria-hidden="true" />
            Maps
            <LegalLink href="#legal">Legal</LegalLink>
          </MapCredit>
        </MapCard>

        <StoreList>
          {stores.map((s) => (
            <StoreCard key={s.name}>
              <Thumb>
                <IoStorefrontOutline size={72} aria-hidden="true" />
              </Thumb>
              <StoreInfo>
                <StoreHead>
                  <StoreName>{s.name}</StoreName>
                  <Distance>{s.km}</Distance>
                </StoreHead>
                {s.address && <Address>{s.address}</Address>}
                {s.genres && <Genres>{s.genres}</Genres>}
                {s.reviews && <Reviews>{s.reviews}</Reviews>}
              </StoreInfo>
              <OpenMark>
                <IoChevronForward size={48} aria-hidden="true" />
              </OpenMark>
            </StoreCard>
          ))}
        </StoreList>
      </Main>
    </Screen>
  );
}
